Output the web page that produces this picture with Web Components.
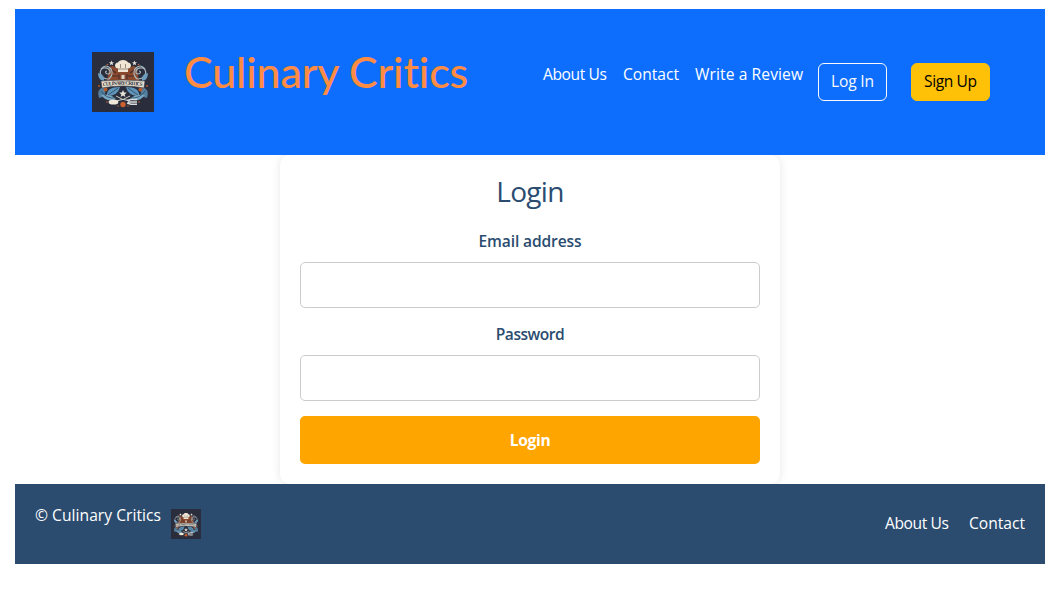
<!DOCTYPE html>
<html lang="en">
<head>
<meta charset="utf-8">
<title>Culinary Critics</title>
<style>
  body { margin: 0; padding: 9px 10px 0 15px; background: #fff; color: #fff; font: 500 15.6px/24px "Open Sans", "Noto Sans", sans-serif; }
</style>
</head>
<body>
<site-header>
  <fit-text w="64">About Us</fit-text>
  <fit-text w="56">Contact</fit-text>
  <fit-text w="108">Write a Review</fit-text>
  <pill-button slot="actions"><fit-text w="43">Log In</fit-text></pill-button>
  <pill-button slot="actions" solid><fit-text w="53">Sign Up</fit-text></pill-button>
</site-header>
<login-card></login-card>
<site-footer>
  <fit-text w="64">About Us</fit-text>
  <fit-text w="56">Contact</fit-text>
</site-footer>
<script>
class Base extends HTMLElement {
  constructor() {
    super();
    this.attachShadow({ mode: 'open' }).innerHTML = this.constructor.markup;
  }
}

// Tracks its text so that the line is exactly w pixels wide.
class FitText extends Base {
  static markup = `<style>
    :host { display: inline-block; white-space: nowrap; }
    span { display: inline-block; }
  </style><span><slot></slot></span>`;
  connectedCallback() {
    const w = +this.getAttribute('w');
    const span = this.shadowRoot.querySelector('span');
    const n = this.textContent.length;
    this.style.width = w + 'px';
    const natural = span.getBoundingClientRect().width;
    span.style.letterSpacing = (w - natural) / (n - 1) + 'px';
  }
}

class BrandLogo extends Base {
  static markup = `<style>
    :host { display: block; }
    svg { display: block; width: 100%; height: 100%; }
  </style>
  <svg viewBox="0 0 62 60" preserveAspectRatio="none" fill="none">
    <rect width="62" height="60" fill="#2a2d3b"/>
    <path d="M17 17Q19 12 23 15L31 20L39 15Q43 12 45 17L47 29H15Z" fill="#8b4a2d"/>
    <path d="M20 18l4 3M38 21l4-3M20 24h6M36 24h6M27 22v5M35 22v5" stroke="#4b2d2a" stroke-width="1.2"/>
    <g id="half">
      <path d="M17 27C7 27 6 17 12 16C18 15 20 22 16 22C13 22 13 19 15 19M9 17Q14 11 19 17Q22 22 17 27" stroke="#a9b8be" stroke-width="1.2"/>
      <path d="M6 21Q13 22 12 29Q6 28 6 21Z" fill="#6d9dbf"/>
      <path d="M12 35Q4 37 7 46Q16 44 12 35Z" fill="#547f9e"/>
      <path d="M28 35Q14 35 15 44Q26 44 28 35Z" fill="#5f93b8"/>
      <path d="M9 43Q18 41 24 47Q15 51 9 43Z" fill="#79a7c3"/>
      <path d="M9 39Q14 47 24 46M16 43L26 36" stroke="#294b63" stroke-width=".8"/>
      <circle cx="13.5" cy="37.5" r="2" fill="#b75a2e"/>
      <circle cx="7" cy="34" r="1" fill="#b75a2e"/>
      <circle cx="15.5" cy="12.5" r=".8" fill="#c56635"/>
      <circle cx="15" cy="50" r=".8" fill="#c56635"/>
      <path d="M19.5 8.5l.7 1.7 1.8.1-1.4 1.2.5 1.8-1.6-1-1.6 1 .5-1.8-1.4-1.2 1.8-.1z" fill="#e5e2d8"/>
    </g>
    <use href="#half" transform="translate(62 0) scale(-1 1)"/>
    <path d="M26 16.5C22 16.5 22 10.5 26 10.5C27 7 35 7 36 10.5C40 10.5 40 16.5 36 16.5V20H26Z" fill="#f0e6d3"/>
    <path d="M28.5 12v4M33.5 12v4M26 17h10" stroke="#8d8278" stroke-width=".9"/>
    <path d="M29.5 23h3v4h-3z" fill="#ddd4c5"/>
    <path d="M9 29Q31 27 53 29L52 36Q31 32 10 36Z" fill="#e7dfd0" stroke="#343744" stroke-width=".6"/>
    <path id="arc" d="M11 34.2Q31 31.2 51 34.2"/>
    <text font-family="Liberation Serif, serif" font-size="5.2" font-weight="bold" fill="#34343c"><textPath href="#arc" textLength="39.5">CULINARY CRITICS</textPath></text>
    <path d="M31 38l1.1 2.5 2.7.1-2.1 1.8.7 2.6-2.4-1.5-2.4 1.5.7-2.6-2.1-1.8 2.7-.1z" fill="#e5e2d8"/>
    <path d="M24 49Q32 48 38 44M38 49Q30 48 24 44" stroke="#cfd0c8" stroke-width="1"/>
    <ellipse cx="21.5" cy="50" rx="4.9" ry="2.6" fill="#efe7d7"/>
    <path d="M35 48.5L39 47.5H45M35 51L39 52.3H45M36 50H45" stroke="#d9dcda" stroke-width="1.5"/>
    <circle cx="31" cy="52.5" r="2.7" fill="#c9602e"/>
    <circle cx="26" cy="54" r=".7" fill="#c9602e"/><circle cx="36" cy="54" r=".7" fill="#c9602e"/>
  </svg>`;
}

class PillButton extends Base {
  static markup = `<style>
    :host { display: block; box-sizing: border-box; height: 38px; padding: 5px 12px 7px; border: 1px solid #f8f9fa; border-radius: 6px; color: #f8f9fa; }
    :host([solid]) { background: #ffc107; border-color: #ffc107; color: #000; }
  </style><slot></slot>`;
}

class SiteHeader extends Base {
  static markup = `<style>
    :host { display: flex; align-items: flex-start; box-sizing: border-box; height: 146px; padding: 43px 55px 0 77px; background: #0d6efd; position: relative; z-index: 1; }
    brand-logo { width: 62px; height: 60px; }
    h1 { margin: -8px 0 0 30px; font: 500 43px/56px Lato, sans-serif; color: #ff8c42; height: 56px; }
    nav { display: flex; gap: 16px; margin: 10px 0 0 auto; }
    .actions { display: flex; gap: 24px; margin: 11px 0 0 15px; }
  </style>
  <brand-logo></brand-logo>
  <h1><fit-text w="285">Culinary Critics</fit-text></h1>
  <nav><slot></slot></nav>
  <div class="actions"><slot name="actions"></slot></div>`;
}

class FormField extends Base {
  static markup = `<style>
    :host { display: block; margin-bottom: 15px; }
    label { display: block; height: 24px; margin: -1px 0 9px; font-weight: 650; }
    input { display: block; box-sizing: border-box; width: 100%; height: 46px; padding: 10px; border: 1px solid #ccc; border-radius: 5px; background: #fff; }
  </style>
  <label><slot></slot></label><input>`;
}

class LoginCard extends Base {
  static markup = `<style>
    :host { display: block; box-sizing: border-box; width: 500px; height: 329px; margin: 0 auto; padding: 20px; border-radius: 10px; box-shadow: 0 0 10px rgba(0,0,0,.1); background: #fff; color: #2b4c6f; text-align: center; }
    h2 { margin: -1px 0 21px; height: 35px; font-size: 28px; line-height: 34px; font-weight: 400; }
    form-field { display: flow-root; }
    button { display: block; width: 100%; height: 48px; padding: 0 0 1px; border: 0; border-radius: 5px; background: #ffa500; color: #fff; font: bold 15.6px/24px "Open Sans", sans-serif; }
  </style>
  <h2><fit-text w="68">Login</fit-text></h2>
  <form-field><fit-text w="103">Email address</fit-text></form-field>
  <form-field><fit-text w="69">Password</fit-text></form-field>
  <button type="button"><fit-text w="41">Login</fit-text></button>`;
}

class SiteFooter extends Base {
  static markup = `<style>
    :host { display: flex; justify-content: space-between; align-items: flex-start; box-sizing: border-box; height: 80px; padding: 19px 20px 0; background: #2b4c6f; position: relative; z-index: 1; }
    .brand { display: flex; gap: 10px; }
    brand-logo { width: 30px; height: 30px; margin-top: 6px; }
    nav { display: flex; gap: 20px; margin-top: 8px; }
  </style>
  <div class="brand"><fit-text w="126">© Culinary Critics</fit-text><brand-logo></brand-logo></div>
  <nav><slot></slot></nav>`;
}

customElements.define('brand-logo', BrandLogo);
customElements.define('pill-button', PillButton);
customElements.define('site-header', SiteHeader);
customElements.define('form-field', FormField);
customElements.define('login-card', LoginCard);
customElements.define('site-footer', SiteFooter);
customElements.define('fit-text', FitText);
</script>
</body>
</html>
